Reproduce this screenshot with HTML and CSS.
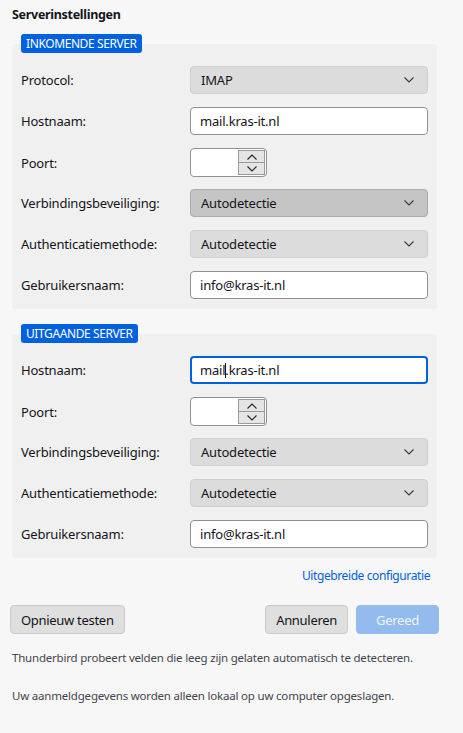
FILE: index.html
```html
<!DOCTYPE html>
<html lang="nl">
<head>
<meta charset="utf-8">
<title>Serverinstellingen</title>
<link rel="stylesheet" href="styles.css">
</head>
<body>
<div class="page">
  <h1 class="title">Serverinstellingen</h1>

  <section class="group group-in">
    <div class="badge">INKOMENDE SERVER</div>
    <div class="panel">
      <div class="row">
        <label class="label">Protocol:</label>
        <div class="select"><span>IMAP</span><svg class="chev" width="10" height="6" viewBox="0 0 10 6"><path d="M0.5 0.5 L5 5 L9.5 0.5" fill="none" stroke="#3a3a3a" stroke-width="1.1"/></svg></div>
      </div>
      <div class="row">
        <label class="label">Hostnaam:</label>
        <div class="input">mail.kras-it.nl</div>
      </div>
      <div class="row">
        <label class="label">Poort:</label>
        <div class="spin">
          <div class="spin-field"></div>
          <div class="spin-btns">
            <div class="spin-btn"><svg width="10" height="6" viewBox="0 0 10 6"><path d="M0.5 5.5 L5 1 L9.5 5.5" fill="none" stroke="#222" stroke-width="1.1"/></svg></div>
            <div class="spin-btn"><svg width="10" height="6" viewBox="0 0 10 6"><path d="M0.5 0.5 L5 5 L9.5 0.5" fill="none" stroke="#222" stroke-width="1.1"/></svg></div>
          </div>
        </div>
      </div>
      <div class="row">
        <label class="label">Verbindingsbeveiliging:</label>
        <div class="select select-hover"><span>Autodetectie</span><svg class="chev" width="10" height="6" viewBox="0 0 10 6"><path d="M0.5 0.5 L5 5 L9.5 0.5" fill="none" stroke="#3a3a3a" stroke-width="1.1"/></svg></div>
      </div>
      <div class="row">
        <label class="label">Authenticatiemethode:</label>
        <div class="select"><span>Autodetectie</span><svg class="chev" width="10" height="6" viewBox="0 0 10 6"><path d="M0.5 0.5 L5 5 L9.5 0.5" fill="none" stroke="#3a3a3a" stroke-width="1.1"/></svg></div>
      </div>
      <div class="row">
        <label class="label">Gebruikersnaam:</label>
        <div class="input">info@kras-it.nl</div>
      </div>
    </div>
  </section>

  <section class="group group-out">
    <div class="badge">UITGAANDE SERVER</div>
    <div class="panel">
      <div class="row">
        <label class="label">Hostnaam:</label>
        <div class="input input-focus">mail<span class="caret"></span>.kras-it.nl</div>
      </div>
      <div class="row">
        <label class="label">Poort:</label>
        <div class="spin">
          <div class="spin-field"></div>
          <div class="spin-btns">
            <div class="spin-btn"><svg width="10" height="6" viewBox="0 0 10 6"><path d="M0.5 5.5 L5 1 L9.5 5.5" fill="none" stroke="#222" stroke-width="1.1"/></svg></div>
            <div class="spin-btn"><svg width="10" height="6" viewBox="0 0 10 6"><path d="M0.5 0.5 L5 5 L9.5 0.5" fill="none" stroke="#222" stroke-width="1.1"/></svg></div>
          </div>
        </div>
      </div>
      <div class="row">
        <label class="label">Verbindingsbeveiliging:</label>
        <div class="select"><span>Autodetectie</span><svg class="chev" width="10" height="6" viewBox="0 0 10 6"><path d="M0.5 0.5 L5 5 L9.5 0.5" fill="none" stroke="#3a3a3a" stroke-width="1.1"/></svg></div>
      </div>
      <div class="row">
        <label class="label">Authenticatiemethode:</label>
        <div class="select"><span>Autodetectie</span><svg class="chev" width="10" height="6" viewBox="0 0 10 6"><path d="M0.5 0.5 L5 5 L9.5 0.5" fill="none" stroke="#3a3a3a" stroke-width="1.1"/></svg></div>
      </div>
      <div class="row">
        <label class="label">Gebruikersnaam:</label>
        <div class="input">info@kras-it.nl</div>
      </div>
    </div>
  </section>

  <div class="link-row"><a class="link" href="#">Uitgebreide configuratie</a></div>

  <div class="buttons">
    <button class="btn">Opnieuw testen</button>
    <div class="btn-group">
      <button class="btn">Annuleren</button>
      <button class="btn btn-primary">Gereed</button>
    </div>
  </div>

  <p class="note">Thunderbird probeert velden die leeg zijn gelaten automatisch te detecteren.</p>
  <p class="note">Uw aanmeldgegevens worden alleen lokaal op uw computer opgeslagen.</p>
</div>
</body>
</html>
```

FILE: styles.css
```css
* { box-sizing: border-box; }
html, body {
  margin: 0;
  padding: 0;
  background: #f7f7f7;
}
body {
  font-family: "Noto Sans", "Open Sans", sans-serif;
  color: #15141a;
  font-size: 13px;
  letter-spacing: -0.2px;
}
.page {
  width: 463px;
  height: 733px;
  padding: 6px 0 0 0;
  overflow: hidden;
}
.title {
  margin: 0 0 0 12px;
  font-size: 12.5px;
  font-weight: 700;
  line-height: 18px;
  letter-spacing: -0.3px;
}
.group {
  display: flex;
  flex-direction: column;
  margin-left: 12px;
  width: 425px;
}
.group-in { margin-top: 10px; }
.group-out { margin-top: 15px; }
.badge {
  align-self: flex-start;
  margin-left: 9px;
  height: 19px;
  padding: 0 5px;
  background: #0061e0;
  color: #fff;
  border-radius: 3px;
  font-size: 12px;
  line-height: 19px;
  letter-spacing: -0.4px;
  position: relative;
  z-index: 1;
  margin-bottom: -9px;
}
.panel {
  background: #f0f0f0;
  border-radius: 4px;
  padding: 22px 9px 10px 9px;
  display: flex;
  flex-direction: column;
  gap: 13px;
}
.row {
  display: grid;
  grid-template-columns: 169px 238px;
  align-items: center;
  height: 28px;
}
.label {
  font-size: 13px;
  color: #15141a;
}
.select {
  height: 28px;
  background: #dcdcdc;
  border: 1px solid #cfcfcf;
  border-radius: 4px;
  display: flex;
  align-items: center;
  justify-content: space-between;
  padding: 0 13px 0 10px;
  font-size: 13px;
}
.select-hover {
  background: #c5c5c5;
  border-color: #ababab;
}
.chev { display: block; }
.input {
  height: 28px;
  background: #fff;
  border: 1px solid #8f8f9d;
  border-radius: 4px;
  display: flex;
  align-items: center;
  padding: 0 9px;
  font-size: 13px;
}
.input-focus {
  border: 2px solid #0061e0;
  padding: 0 8px;
}
.caret {
  display: inline-block;
  width: 1px;
  height: 15px;
  background: #15141a;
  margin: 0 -1px 0 0;
}
.spin {
  width: 77px;
  height: 29px;
  background: #fff;
  border: 1px solid #8f8f9d;
  border-radius: 4px;
  display: flex;
  align-items: center;
  padding: 0 1px 0 0;
}
.spin-field { flex: 1; }
.spin-btns {
  width: 27px;
  height: 25px;
  display: flex;
  flex-direction: column;
  border: 1px solid #9a9a9a;
}
.spin-btn {
  flex: 1;
  background: #e5e5e5;
  display: flex;
  align-items: center;
  justify-content: center;
}
.spin-btn + .spin-btn { border-top: 1px solid #9a9a9a; }
.link-row {
  display: flex;
  justify-content: flex-end;
  width: 430px;
  margin-top: 10px;
}
.link {
  color: #0061e0;
  font-size: 12px;
  text-decoration: none;
  line-height: 16px;
  letter-spacing: -0.4px;
}
.buttons {
  display: flex;
  justify-content: space-between;
  margin: 21px 0 0 10px;
  width: 429px;
}
.btn-group { display: flex; gap: 8px; }
.btn {
  font-family: inherit;
  font-size: 13px;
  letter-spacing: -0.3px;
  color: #15141a;
  height: 29px;
  padding: 0 10px;
  background: #dfdfdf;
  border: 1px solid #c9c9c9;
  border-radius: 4px;
}
.btn-primary {
  background: #93bbee;
  border-color: #93bbee;
  color: #eef4fc;
  width: 83px;
}
.note {
  margin: 15px 0 0 12px;
  font-size: 11.5px;
  letter-spacing: -0.2px;
  color: #45454d;
  line-height: 17px;
}
.note + .note { margin-top: 21px; }
```
